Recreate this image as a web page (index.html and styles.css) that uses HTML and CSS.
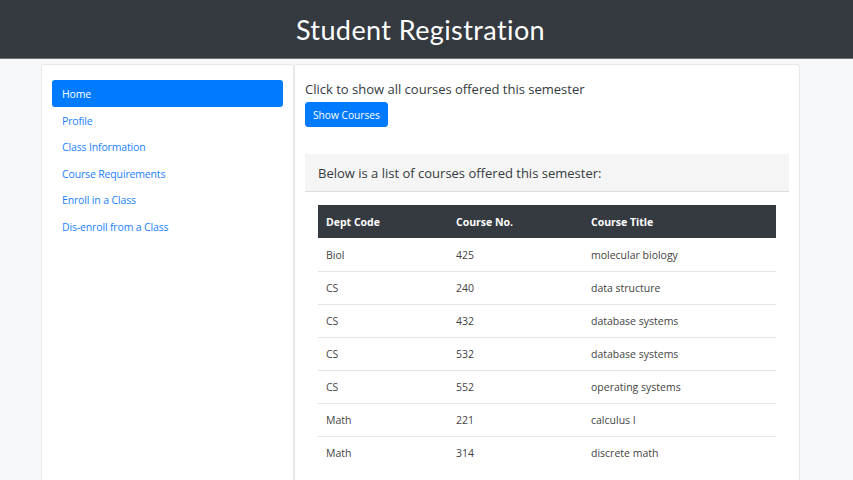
FILE: index.html
```html
<!DOCTYPE html>
<html>
<head>
<meta charset="utf-8">
<link rel="stylesheet" href="styles.css">
</head>
<body>
<header class="topbar"><h1 class="title">Student Registration</h1></header>
<div class="container">
  <aside class="card side">
    <nav class="nav">
      <a class="nav-link active">Home</a>
      <a class="nav-link">Profile</a>
      <a class="nav-link">Class Information</a>
      <a class="nav-link">Course Requirements</a>
      <a class="nav-link">Enroll in a Class</a>
      <a class="nav-link">Dis-enroll from a Class</a>
    </nav>
  </aside>
  <main class="card main">
    <p class="lead">Click to show all courses offered this semester</p>
    <button class="btn">Show Courses</button>
    <div class="panel">
      <div class="panel-head">Below is a list of courses offered this semester:</div>
      <table class="table">
        <thead>
          <tr><th class="c1">Dept Code</th><th class="c2">Course No.</th><th>Course Title</th></tr>
        </thead>
        <tbody>
          <tr><td>Biol</td><td>425</td><td>molecular biology</td></tr>
          <tr><td>CS</td><td>240</td><td>data structure</td></tr>
          <tr><td>CS</td><td>432</td><td>database systems</td></tr>
          <tr><td>CS</td><td>532</td><td>database systems</td></tr>
          <tr><td>CS</td><td>552</td><td>operating systems</td></tr>
          <tr><td>Math</td><td>221</td><td>calculus I</td></tr>
          <tr><td>Math</td><td>314</td><td>discrete math</td></tr>
        </tbody>
      </table>
    </div>
  </main>
</div>
</body>
</html>
```
FILE: styles.css
```css
* { box-sizing: border-box; }
html, body { margin: 0; padding: 0; }
body {
  background: #f7f8fa;
  font-family: "Open Sans", "Noto Sans", sans-serif;
  color: #212529;
  height: 480px;
  overflow: hidden;
}
.topbar {
  background: #343a40;
  height: 59px;
  border-bottom: 1px solid #6c7075;
  display: flex;
  align-items: center;
  justify-content: center;
}
.title {
  margin: 0;
  color: #fff;
  font-family: "Lato", sans-serif;
  font-weight: 400;
  font-size: 27px;
  letter-spacing: 0.4px;
  padding: 1px 12px 0 0;
}
.container {
  display: flex;
  margin: 5px 0 0 41px;
  width: 759px;
}
.card {
  background: #fff;
  border: 1px solid #e6e8eb;
  border-radius: 3px;
  min-height: 430px;
}
.side {
  width: 253px;
  padding: 15px 10px;
}
.nav { display: flex; flex-direction: column; }
.nav-link {
  display: block;
  color: #1a7fff;
  font-size: 10.5px;
  letter-spacing: -0.15px;
  line-height: 16.5px;
  padding: 6px 10px 4px;
  border-radius: 3px;
}
.nav-link.active { background: #007bff; color: #fff; }
.main {
  flex: 1;
  padding: 15px 10px 0 10px;
}
.lead {
  margin: 0 0 4px;
  font-size: 13px;
  line-height: 18px;
  color: #343a40;
}
.btn {
  display: block;
  font-family: inherit;
  font-size: 10.2px;
  color: #fff;
  background: #007bff;
  border: 1px solid #007bff;
  border-radius: 3px;
  padding: 0 7px;
  height: 25px;
}
.panel { margin-top: 27px; }
.panel-head {
  background: #f5f5f5;
  border-bottom: 1px solid #ddd;
  height: 38px;
  padding: 0 13px;
  display: flex;
  align-items: center;
  font-size: 13px;
  color: #343a40;
}
.table {
  margin: 13px 13px 0 13px;
  width: calc(100% - 26px);
  border-collapse: collapse;
  font-size: 10.5px;
}
.table th {
  background: #343a40;
  color: #fff;
  text-align: left;
  font-weight: 700;
  height: 33px;
  padding: 0 8px;
}
.table th.c1 { width: 130px; }
.table th.c2 { width: 135px; }
.table td {
  height: 33px;
  padding: 1px 8px 0;
  color: #444;
  border-top: 1px solid #e1e5ea;
}
.table tbody tr:first-child td { border-top: none; }
```
